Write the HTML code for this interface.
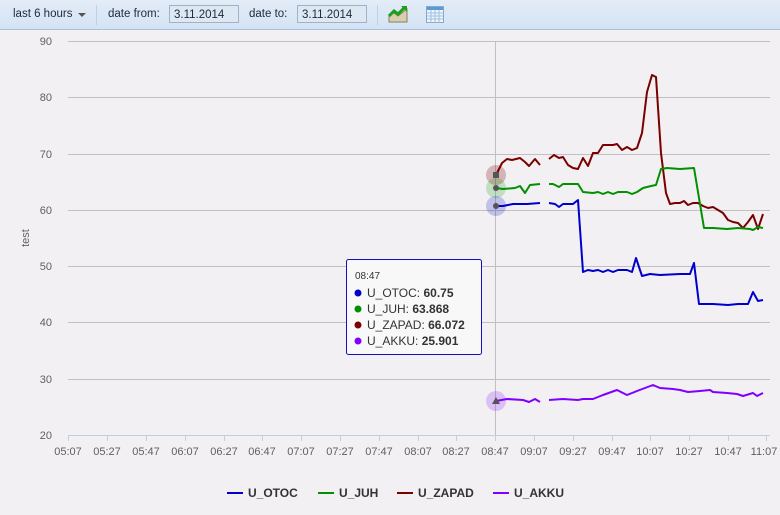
<!DOCTYPE html>
<html><head><meta charset="utf-8"><style>
body{margin:0;width:780px;height:515px;background:#f2f0f3;font-family:"Liberation Sans",sans-serif;overflow:hidden;position:relative}
.hdr{position:absolute;left:0;top:0;width:780px;height:29px;background:linear-gradient(#e3ecf7,#d4e3f4);border-bottom:1px solid #a8c1e0;font-size:11.5px;color:#1e2a3a}
.hdr span{position:absolute;top:8px}
.inp{position:absolute;top:5px;height:18px;border:1px solid #9bb3cc;background:#dde8f3;font-size:11.5px;line-height:18px;padding-left:4px;box-sizing:border-box}
.sep{position:absolute;top:5px;width:1px;height:20px;background:#bcd0e6}
</style></head><body>
<div class="hdr">
<span style="left:13px">last 6 hours</span>
<div style="position:absolute;left:78px;top:13px;border-left:4px solid transparent;border-right:4px solid transparent;border-top:4px solid #555"></div>
<div class="sep" style="left:96px"></div>
<span style="left:108px">date from:</span>
<div class="inp" style="left:169px;width:70px">3.11.2014</div>
<span style="left:249px">date to:</span>
<div class="inp" style="left:297px;width:70px">3.11.2014</div>
<div class="sep" style="left:377px"></div>
<svg style="position:absolute;left:388px;top:5px" width="20" height="18"><path d="M1 17 L1 11 L6 8 L10 11 L19 4 L19 17Z" fill="#d8cfb0" stroke="#8a8060"/><path d="M1 11 L6 6 L10 9 L16 3" stroke="#1aa01a" stroke-width="3" fill="none"/><path d="M13 1 L19 1 L19 7Z" fill="#1aa01a"/></svg>
<svg style="position:absolute;left:426px;top:6px" width="18" height="17"><rect x="0.5" y="0.5" width="17" height="16" fill="#eef5fc" stroke="#8aa8c8"/><rect x="1" y="1" width="16" height="3" fill="#5a9ad8"/><path d="M1 7H17M1 10H17M1 13H17M5 4V17M9 4V17M13 4V17" stroke="#9ec0e2"/></svg>
</div>
<svg width="780" height="515" style="position:absolute;left:0;top:0" font-family="Liberation Sans, sans-serif">
<g stroke="#c0c0c0" stroke-width="1">
<path d="M68 41.5H770M68 97.5H770M68 154.5H770M68 210.5H770M68 266.5H770M68 322.5H770M68 379.5H770"/>
</g>
<path d="M68 435.5H770" stroke="#c0d0e0"/>
<g stroke="#c0d0e0"><path d="M68.5 435V441M107.5 435V441M146.5 435V441M185.5 435V441M224.5 435V441M262.5 435V441M301.5 435V441M340.5 435V441M379.5 435V441M418.5 435V441M456.5 435V441M495.5 435V441M534.5 435V441M573.5 435V441M612.5 435V441M650.5 435V441M689.5 435V441M728.5 435V441M766.5 435V441"/></g>
<path d="M495.5 41V435" stroke="#c0c0c0"/>
<g font-size="11" fill="#606060" text-anchor="end">
<text x="52" y="45">90</text><text x="52" y="101">80</text><text x="52" y="158">70</text><text x="52" y="214">60</text><text x="52" y="270">50</text><text x="52" y="326">40</text><text x="52" y="383">30</text><text x="52" y="439">20</text></g>
<text x="29" y="238" font-size="11" fill="#606060" transform="rotate(-90 29 238)" text-anchor="middle">test</text>
<g font-size="11" fill="#606060" text-anchor="middle">
<text x="68" y="455">05:07</text><text x="107" y="455">05:27</text><text x="146" y="455">05:47</text><text x="185" y="455">06:07</text><text x="224" y="455">06:27</text><text x="262" y="455">06:47</text><text x="301" y="455">07:07</text><text x="340" y="455">07:27</text><text x="379" y="455">07:47</text><text x="418" y="455">08:07</text><text x="456" y="455">08:27</text><text x="495" y="455">08:47</text><text x="534" y="455">09:07</text><text x="573" y="455">09:27</text><text x="612" y="455">09:47</text><text x="650" y="455">10:07</text><text x="689" y="455">10:27</text><text x="728" y="455">10:47</text><text x="764" y="455">11:07</text></g>
<g fill="none" stroke-width="2" stroke-linejoin="round">
<path stroke="#7a0000" d="M496 175L502 163L507 159L512 160L516 159L520 158L525 162L529 166L535 159L540 165M549 159L554 155L559 158L563 157L568 165L573 168L578 169L583 158L588 166L593 153L598 153L603 145L608 145L613 145L617 144L622 150L627 147L632 150L637 148L642 133L647 92L652 75L656 77L661 153L666 193L670 204L675 203L680 203L684 201L688 205L693 203L698 203L703 206L708 208L713 207L718 210L723 213L728 220L733 222L738 223L743 228L748 222L753 215L758 229L763 214"/>
<path stroke="#009000" d="M496 188L503 189L515 188L520 186L525 193L530 185L540 184M549 184L553 184L559 187L563 184L578 184L583 192L593 193L598 192L603 194L608 192L613 194L618 192L627 192L632 194L637 192L643 188L651 186L656 185L661 169L667 168L680 169L694 168L704 228L713 228L727 229L738 228L750 229L753 230L758 227L763 228"/>
<path stroke="#0000cc" d="M496 206L503 206L513 204L527 204L540 203M549 203L555 204L559 207L563 204L573 204L578 200L583 272L588 270L593 271L598 270L603 272L608 270L613 272L618 270L627 270L632 272L636 258L642 276L650 274L660 275L680 274L690 274L694 263L699 304L713 304L728 305L738 304L748 304L753 292L758 301L763 300"/>
<path stroke="#8000ff" d="M496 401L507 399L523 400L529 402L535 399L540 402M549 400L563 399L578 400L583 399L593 399L603 395L617 390L627 395L637 391L653 385L660 388L673 389L680 390L688 392L700 391L710 390L713 392L727 393L737 394L743 396L753 393L757 396L763 393"/>
</g>
<circle cx="496" cy="175" r="10" fill="#7a0000" opacity="0.25"/>
<circle cx="496" cy="188" r="10" fill="#009000" opacity="0.2"/>
<circle cx="496" cy="206" r="10" fill="#0000cc" opacity="0.2"/>
<circle cx="496" cy="401" r="10" fill="#8000ff" opacity="0.2"/>
<rect x="493" y="172" width="6" height="6" fill="#555"/><circle cx="496" cy="188" r="3" fill="#555"/><circle cx="496" cy="206" r="3" fill="#555"/><path d="M492 404L496 397L500 404Z" fill="#555"/>
<rect x="346.5" y="259.5" width="135" height="95" rx="2" fill="#f8f8f9" stroke="#1010c0"/>
<text x="355" y="279" font-size="10" fill="#333">08:47</text>
<g font-size="12" fill="#333">
<circle cx="358" cy="293" r="3.5" fill="#0000cc"/><text x="367" y="297">U_OTOC: <tspan font-weight="bold">60.75</tspan></text>
<circle cx="358" cy="309" r="3.5" fill="#009000"/><text x="367" y="313">U_JUH: <tspan font-weight="bold">63.868</tspan></text>
<circle cx="358" cy="325" r="3.5" fill="#7a0000"/><text x="367" y="329">U_ZAPAD: <tspan font-weight="bold">66.072</tspan></text>
<circle cx="358" cy="341" r="3.5" fill="#8000ff"/><text x="367" y="345">U_AKKU: <tspan font-weight="bold">25.901</tspan></text>
</g>
<g font-size="12" font-weight="bold" fill="#333" stroke-width="2">
<path d="M227 493H243" stroke="#0000cc"/><text x="248" y="497">U_OTOC</text>
<path d="M318 493H334" stroke="#009000"/><text x="339" y="497">U_JUH</text>
<path d="M397 493H413" stroke="#7a0000"/><text x="418" y="497">U_ZAPAD</text>
<path d="M493 493H509" stroke="#8000ff"/><text x="514" y="497">U_AKKU</text>
</g>
</svg>
</body></html>
